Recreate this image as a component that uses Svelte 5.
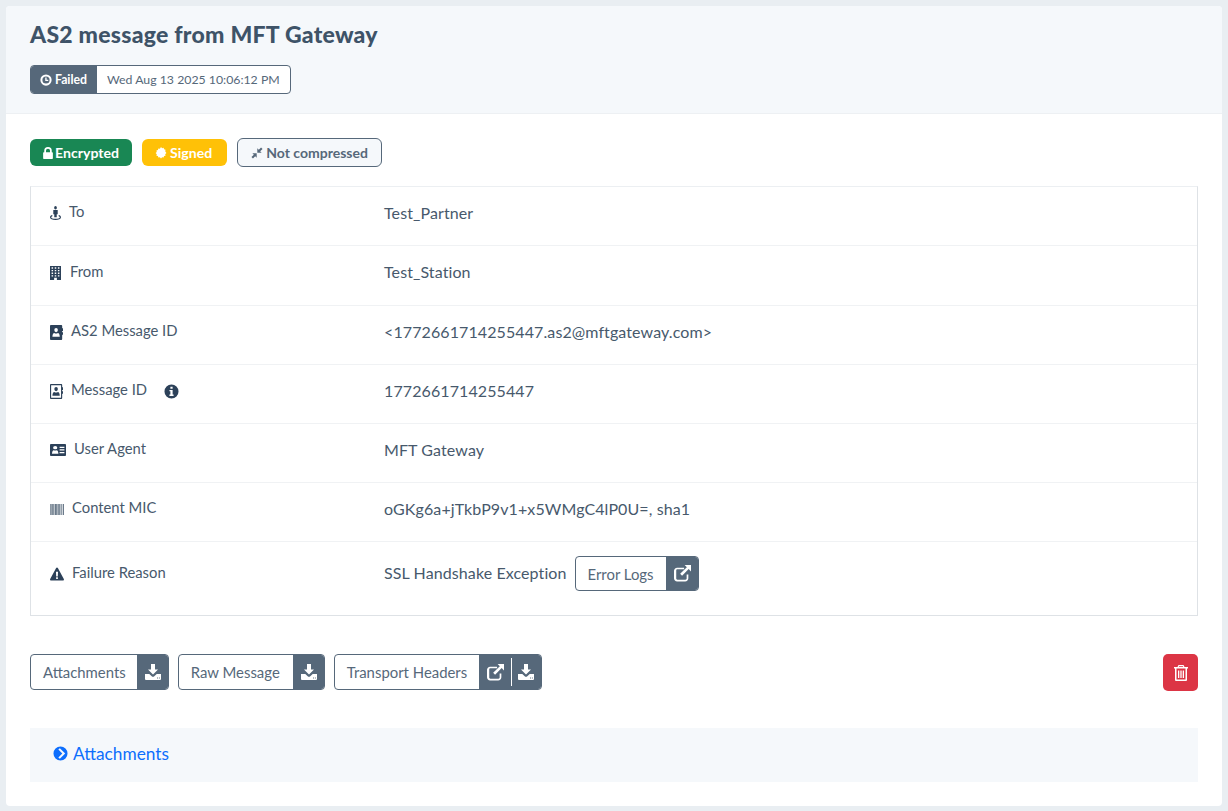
<script>
	const icons = {
		clock: 'M8 .5a7.500 7.500 0 1 0 0 15 7.500 7.500 0 0 0 0-15zm0 2.700a4.800 4.800 0 1 1 0 9.600 4.800 4.800 0 0 1 0-9.600zM7 4.800v4.400h4V7.500H8.800V4.800z',
		lock: 'M3 7V5a5 5 0 0 1 10 0v2h.6c.5 0 .9.4.9.900v7.200c0 .5-.4.9-.9.9H2.400a.9.9 0 0 1-.9-.9V7.900c0-.5.4-.9.9-.9zm2.300 0h5.400V5a2.700 2.700 0 0 0-5.400 0z',
		cert: 'M8 0l1.500 1.600L11.500 1l.6 2 2 .5-.5 2.100L15.200 8l-1.600 1.500.5 2-2 .6-.6 2-2-.5L8 15.200l-1.500-1.600-2 .5-.6-2-2-.6.5-2L.8 8l1.600-1.500-.5-2 2-.6.6-2 2 .5z',
		compress: 'M8.400 7.600V1.800l2 2L13.400.6l2 2-3.200 3.200 2 1.800zM7.600 8.400v5.800l-2-2-3 3.200-2-2 3.200-3.200-2-1.800z',
		person: 'M8 0a2 2 0 1 1 0 4A2 2 0 0 1 8 0zM4.800 4.600h6.400v4.800H9.800v3.400H6.200V9.400H4.800zM3.400 10.400v1.400C2.300 12.100 1.700 12.500 1.700 13c0 .8 2.800 1.500 6.300 1.500s6.300-.7 6.300-1.500c0-.5-.6-.9-1.700-1.200v-1.400c2 .4 3.400 1.300 3.400 2.500C16 14.800 12.400 16 8 16s-8-1.200-8-3.100c0-1.200 1.400-2.100 3.400-2.500z',
		building: 'M0 0h16v16H10v-2.500H6V16H0zm2.300 1.500v1.600h2.200V1.500zm4.600 0v1.600h2.200V1.500zm4.600 0v1.600h2.200V1.500zM2.300 4.500v1.600h2.200V4.500zm4.600 0v1.600h2.200V4.500zm4.600 0v1.600h2.200V4.500zM2.300 7.500v1.600h2.200V7.500zm4.600 0v1.600h2.200V7.500zm4.600 0v1.600h2.200V7.500zM2.300 10.500v1.600h2.200v-1.600zm4.600 0v1.600h2.200v-1.600zm4.600 0v1.600h2.200v-1.600z',
		book: 'M1 0h13a1 1 0 0 1 1 1v2.500h1v2.800h-1v1.400h1v2.800h-1V15a1 1 0 0 1-1 1H1a1 1 0 0 1-1-1V1a1 1 0 0 1 1-1zm6.500 3.200a2.200 2.200 0 1 0 0 4.400 2.200 2.200 0 0 0 0-4.400zM3 12.400h9c0-2.300-1-3.900-2.300-3.900-.6.300-1.300.6-2.200.6s-1.600-.3-2.200-.6C4 8.500 3 10.100 3 12.400z',
		bookO: 'M1 0h13a1 1 0 0 1 1 1v2.500h1v2.800h-1v1.400h1v2.800h-1V15a1 1 0 0 1-1 1H1a1 1 0 0 1-1-1V1a1 1 0 0 1 1-1zm.4 1.400v13.200h12.200V1.400zM7.500 3.200a2.200 2.200 0 1 1 0 4.400 2.200 2.200 0 0 1 0-4.400zM3 12.400c0-2.300 1-3.900 2.300-3.900.6.300 1.300.6 2.200.6s1.600-.3 2.200-.6c1.300 0 2.300 1.600 2.300 3.900z',
		card: 'M1 0h14a1 1 0 0 1 1 1v14a1 1 0 0 1-1 1H1a1 1 0 0 1-1-1V1a1 1 0 0 1 1-1zm4.200 2.800a2.100 2.100 0 1 0 0 4.200 2.100 2.100 0 0 0 0-4.200zM2 13h6.400c0-2.700-.8-4.800-1.700-4.800-.4.300-.9.500-1.500.5s-1.100-.2-1.500-.5C2.800 8.200 2 10.300 2 13zM9.600 3.500v1.800h4.800V3.500zm0 3.500v1.800h4.800V7zm0 3.500v1.800h4.800v-1.800z',
		warn: 'M8 .5c.4 0 .8.2 1 .6l6.800 12.700c.4.800-.1 1.700-1 1.700H1.200c-.9 0-1.400-.9-1-1.700L7 1.100c.2-.4.600-.6 1-.6zM6.800 5.500l.3 5.300h1.800l.3-5.300zm.2 6.300v1.900h2v-1.900z',
		info: 'M8 .5a7.500 7.500 0 1 1 0 15A7.500 7.500 0 0 1 8 .5zM6.800 2.800v2.200h2.400V2.800zM5.800 6.300v1.500h1v3.300h-1v1.600h4.400v-1.600h-1V6.300z',
		external: 'M3 2.500h6.500v1.600H3.200c-.6 0-1.100.5-1.100 1.100v7.600c0 .6.500 1.100 1.100 1.100h7.600c.6 0 1.100-.5 1.100-1.100V9h1.600v3.500c0 1.700-1.300 3-3 3H3c-1.700 0-3-1.300-3-3v-7c0-1.700 1.300-3 3-3zM10 0h6v6l-2.200-2.200-6.200 6.300-1.800-1.800L12.100 2.100z',
		download: 'M6 0h4v5.500h3L8 10.500 3 5.500h3zM0 10h4.300L6.700 12.200c.7.700 1.900.7 2.600 0L11.700 10H16v5a1 1 0 0 1-1 1H1a1 1 0 0 1-1-1zm12 3.600v.9h.9v-.9zm1.900 0v.9h.9v-.9z',
		trash: 'M5.500 0h5l1 2H15v1.500h-1V15a1 1 0 0 1-1 1H3a1 1 0 0 1-1-1V3.500H1V2h3.500zm.6 1.200L5.800 2h4.400l-.3-.8zM3.500 3.500v11h9v-11zM5 5.500h1.300v7.500H5zm2.350 0h1.300v7.500h-1.300zm2.350 0H11v7.500H9.700z',
		chevron: 'M8 .5a7.500 7.500 0 1 1 0 15A7.500 7.500 0 0 1 8 .5zM5.700 3.800 9.900 8l-4.200 4.200 1.600 1.500L13 8 7.300 2.300z'
	};

	const rows = [
		{ icon: 'person', w: 11, h: 14, label: 'To', value: 'Test_Partner' },
		{ icon: 'building', w: 11, h: 14, label: 'From', value: 'Test_Station', gap: 9 },
		{ icon: 'book', w: 13, h: 15, label: 'AS2 Message ID', value: '<1772661714255447.as2@mftgateway.com>' },
		{ icon: 'bookO', w: 13, h: 15, label: 'Message ID', value: '1772661714255447', info: true },
		{ icon: 'card', w: 16, h: 12, label: 'User Agent', value: 'MFT Gateway' },
		{ icon: 'barcode', w: 14, h: 11, label: 'Content MIC', value: 'oGKg6a+jTkbP9v1+x5WMgC4lP0U=, sha1' },
		{ icon: 'warn', w: 14, h: 14, label: 'Failure Reason', value: 'SSL Handshake Exception', logs: true }
	];

	// pad evens out the label widths of the substitute font
	const actions = [
		{ label: 'Attachments', icons: ['download'], pad: 11 },
		{ label: 'Raw Message', icons: ['download'], pad: 13 },
		{ label: 'Transport Headers', icons: ['external', 'download'], pad: 12 }
	];

	const bars = [0, 1.5, 3, 4, 5.5, 7, 8.5, 9.5, 11, 12.5, 14.5];
</script>

<main class="card">
	<header class="head">
		<h1>AS2 message from MFT Gateway</h1>
		<div class="status">
			<span class="status-name"><svg class="ic12" viewBox="0 0 16 16"><path d={icons.clock} /></svg>Failed</span>
			<span class="status-date">Wed Aug 13 2025 10:06:12 PM</span>
		</div>
	</header>

	<section class="body">
		<div class="flags">
			<span class="flag green"><svg class="lock" viewBox="1.500 0 13 16"><path d={icons.lock} /></svg>Encrypted</span>
			<span class="flag yellow"><svg class="ic12" viewBox="0 0 16 16"><path d={icons.cert} /></svg>Signed</span>
			<span class="flag outline"><svg class="ic12" viewBox="0 0 16 16"><path d={icons.compress} /></svg>Not compressed</span>
		</div>

		<div class="table">
			{#each rows as row}
				<div class="row" class:last={row.logs}>
					<div class="key" style:gap="{row.gap ?? 8}px">
						<svg class="row-icon" style:width="{row.w}px" style:height="{row.h}px" viewBox="0 0 16 16" preserveAspectRatio="none">
							{#if row.icon === 'barcode'}
								{#each bars as x, i}
									<rect {x} y="0" width={i % 3 === 1 ? 1.5 : 0.9} height="16" opacity="0.7" />
								{/each}
							{:else}
								<path d={icons[row.icon]} />
							{/if}
						</svg>
						<span>{row.label}</span>
						{#if row.info}
							<svg class="info" viewBox="0 0 16 16"><path d={icons.info} /></svg>
						{/if}
					</div>
					<div class="val">
						<span class="val-text">{row.value}</span>
						{#if row.logs}
							<span class="btn logs">
								<span class="btn-text">Error Logs</span>
								<span class="btn-icons"><svg class="ic17" viewBox="0 0 16 16"><path d={icons.external} /></svg></span>
							</span>
						{/if}
					</div>
				</div>
			{/each}
		</div>

		<div class="actions">
			{#each actions as action}
				<span class="btn">
					<span class="btn-text" style:padding-right="{action.pad}px">{action.label}</span>
					<span class="btn-icons">
						{#each action.icons as name, i}
							{#if i > 0}<i class="sep"></i>{/if}
							<svg class={name === 'download' ? 'ic16' : 'ic17'} viewBox="0 0 16 16"><path d={icons[name]} /></svg>
						{/each}
					</span>
				</span>
			{/each}
			<span class="delete"><svg class="ic16" viewBox="0 0 16 16"><path d={icons.trash} /></svg></span>
		</div>

		<div class="attach">
			<svg class="ic15" viewBox="0 0 16 16"><path d={icons.chevron} /></svg>
			<span>Attachments</span>
		</div>
	</section>
</main>

<style>
	:global(body) {
		margin: 0;
		background: #e9eef2;
		font-family: Lato, 'Open Sans', sans-serif;
		color: #3e5368;
	}

	svg {
		fill: currentColor;
		flex: none;
		display: block;
	}
	.lock { width: 10px; height: 12px; }
	.ic12 { width: 12px; height: 12px; }
	.ic15 { width: 15px; height: 15px; }
	.ic16 { width: 16px; height: 16px; }
	.ic17 { width: 17px; height: 17px; }

	.card {
		margin: 6px;
		width: 1216px;
		height: 800px;
		box-sizing: border-box;
		background: #fff;
		border-radius: 4px;
		overflow: hidden;
	}

	.head {
		height: 108px;
		box-sizing: border-box;
		padding: 15px 24px 0;
		background: #f5f8fb;
		border-bottom: 1px solid #edf0f3;
	}

	h1 {
		margin: 0 0 17px;
		font-size: 23px;
		line-height: 27px;
		font-weight: 900;
		letter-spacing: 0.25px;
		color: #3e5368;
	}

	.status {
		display: inline-flex;
		height: 29px;
		border: 1px solid #56687a;
		border-radius: 4px;
		box-sizing: border-box;
		overflow: hidden;
		font-size: 12.300px;
		background: #fff;
	}

	.status-name {
		display: flex;
		align-items: center;
		gap: 3px;
		width: 66px;
		box-sizing: border-box;
		padding-left: 9px;
		background: #56687a;
		color: #fff;
		font-weight: 700;
	}

	.status-date {
		display: flex;
		align-items: center;
		padding: 0 10px;
		color: #56687a;
	}

	.body {
		padding: 24px 24px 0;
	}

	.flags {
		display: flex;
		gap: 10px;
		align-items: center;
		height: 29px;
	}

	.flag {
		display: flex;
		align-items: center;
		gap: 2px;
		height: 27px;
		box-sizing: border-box;
		padding: 0 13px;
		border-radius: 6px;
		font-size: 14.100px;
		font-weight: 700;
		color: #fff;
	}
	.green { background: #198754; }
	.yellow {
		padding: 0 15px 0 13px;
		gap: 3px;
		background: #ffc107;
	}
	.outline {
		height: 29px;
		gap: 3px;
		padding: 0 13px;
		font-size: 14px;
		background: #f5f8fb;
		border: 1px solid #56687a;
		color: #56687a;
	}

	.table {
		margin-top: 19px;
		height: 430px;
		box-sizing: border-box;
		border-style: solid;
		border-color: #eceff2 #dee2e6 #dee2e6 #dee2e6;
		border-width: 1px;
	}

	.row {
		display: grid;
		grid-template-columns: 334px 1fr;
		height: 59px;
		box-sizing: border-box;
		padding: 0 19px 8px;
		border-bottom: 1px solid #f0f2f4;
		align-items: center;
	}
	.row:nth-child(2) {
		height: 60px;
	}
	.row.last {
		height: 73px;
		padding-bottom: 10px;
		border-bottom: 0;
	}
	.row.last .key {
		top: -2px;
	}
	.row.last .val-text {
		padding-bottom: 2px;
	}

	.key {
		display: flex;
		align-items: center;
		color: #47596c;
		position: relative;
		top: -1px;
		font-size: 14.800px;
	}

	.row-icon {
		color: #2c4159;
		position: relative;
		top: 2px;
	}

	.info {
		width: 15px;
		height: 15px;
		margin-left: 9px;
		color: #2c4159;
		position: relative;
		top: 2px;
	}

	.val {
		display: flex;
		align-items: center;
		gap: 8px;
		font-size: 16px;
		letter-spacing: 0.1px;
		color: #47596c;
	}

	.btn {
		display: inline-flex;
		height: 36px;
		box-sizing: border-box;
		border: 1px solid #56687a;
		border-radius: 4px;
		overflow: hidden;
		background: #fff;
		font-size: 14.900px;
		letter-spacing: 0;
		color: #56687a;
	}
	.btn-text {
		display: flex;
		align-items: center;
		padding: 0 12px;
	}
	.btn-icons {
		display: flex;
		align-items: center;
		gap: 6.500px;
		padding: 0 7px 0 8px;
		background: #56687a;
		color: #fff;
	}
	.logs { height: 35px; }
	.sep {
		width: 1px;
		height: 28px;
		background: #fff;
	}

	.actions {
		display: flex;
		gap: 9px;
		align-items: flex-start;
		margin-top: 38px;
	}

	.delete {
		margin-left: auto;
		width: 35px;
		height: 37px;
		display: flex;
		align-items: center;
		justify-content: center;
		background: #dc3545;
		border-radius: 5px;
		color: #fff;
	}

	.attach {
		margin-top: 37px;
		height: 54px;
		box-sizing: border-box;
		display: flex;
		align-items: center;
		gap: 5px;
		padding: 0 0 2.500px 23px;
		background: #f5f8fb;
		color: #0d6efd;
		font-size: 17.300px;
	}
</style>
